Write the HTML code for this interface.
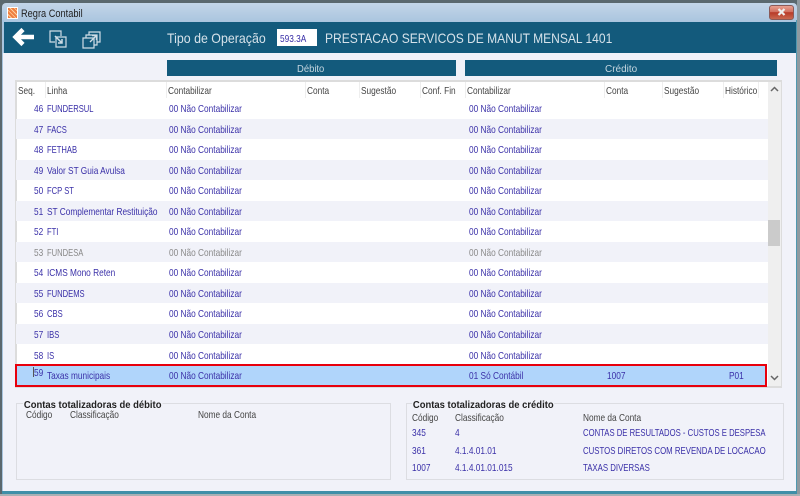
<!DOCTYPE html>
<html><head><meta charset="utf-8">
<style>
*{box-sizing:border-box;margin:0;padding:0}
html,body{width:800px;height:496px;overflow:hidden;background:#3a4a50}
body{position:relative;font-family:"Liberation Sans",sans-serif;font-size:10.5px;color:#444}
#w{position:absolute;left:0;top:0;width:800px;height:496px;filter:blur(.35px)}
.a{position:absolute;white-space:nowrap;line-height:12px}
.t{transform:scaleX(.79);transform-origin:0 0;margin-top:1px}
.u{transform:scaleX(.725)}
.b{color:#3a30a8}
.g{color:#8a8a8a}
.r{position:absolute;left:16px;width:752px}
</style></head><body><div id="w">
<div class="a" style="left:0;top:0;width:800px;height:496px;background:#5a686e"></div>
<div class="a" style="left:797px;top:0;width:3px;height:496px;background:#8f9aa0"></div>
<div class="a" style="left:0;top:494px;width:800px;height:2px;background:#a8b0b4"></div>
<div class="a" style="left:2px;top:3px;width:795px;height:20px;background:linear-gradient(#c3d5e8,#a8c4de);border-radius:4px 4px 0 0"></div>
<div class="a" style="left:2px;top:20px;width:2px;height:472px;background:#a8c4de"></div>
<div class="a" style="left:796px;top:20px;width:1px;height:472px;background:#4f98b0"></div>
<div class="a" style="left:2px;top:491px;width:795px;height:3px;background:#3f8fa8"></div>
<div class="a" style="left:7px;top:7px;width:11px;height:12px;background:#fff"></div>
<div class="a" style="left:8px;top:8px;width:9px;height:10px;background:repeating-linear-gradient(45deg,#f08040 0 2px,#fbd0a0 2px 3px)"></div>
<div class="a t" style="left:21px;top:7px;font-size:11px;color:#222;transform:scaleX(.84)">Regra Contabil</div>
<div class="a" style="left:769px;top:5px;width:25px;height:15px;border:1px solid #8a5a58;border-radius:3px;background:linear-gradient(#e8a090 0,#d07060 45%,#b83a28 50%,#c86850 100%)"></div>
<svg class="a" style="left:777px;top:8px" width="9" height="8" viewBox="0 0 9 8"><path d="M1.5 1 7.5 7M7.5 1 1.5 7" stroke="#eee" stroke-width="2.2"/></svg>

<div class="a" style="left:4px;top:22px;width:792px;height:31px;background:#135a7c"></div>
<div class="a" style="left:3px;top:53px;width:793px;height:438px;background:#f1f2f9"></div>

<svg class="a" style="left:12px;top:26px" width="24" height="22" viewBox="0 0 24 22"><path d="M11 3.500 3.500 11l7.500 7.500M5 11h17" fill="none" stroke="#fff" stroke-width="4.500"/></svg>
<svg class="a" style="left:48px;top:29px" width="20" height="20" viewBox="0 0 20 20" fill="none" stroke="#cfdde6" stroke-width="1.2"><path d="M7 13H2V2h11v5"/><path d="M8 8h10v10H8z"/><path d="M7 7l7 7M14 10v4h-4" stroke-width="1.5"/></svg>
<svg class="a" style="left:82px;top:30px" width="20" height="20" viewBox="0 0 20 20" fill="none" stroke="#cfdde6" stroke-width="1.2"><path d="M1 8h11v10H1z"/><path d="M4 8V5h11v10h-3"/><path d="M7 5V2h11v10h-3"/><path d="M8 12l6-6M10 5.500h4.500V10" stroke-width="1.4"/></svg>

<div class="a t" style="left:167px;top:29px;font-size:14px;line-height:16px;color:#d6e2ea;transform:scaleX(.885)">Tipo de Operação</div>
<div class="a" style="left:277px;top:29px;width:40px;height:17px;background:#fff"></div>
<div class="a t b" style="left:280px;top:32px">593.3A</div>
<div class="a t" style="left:325px;top:29px;font-size:14px;line-height:16px;color:#d6e2ea;transform:scaleX(.86)">PRESTACAO SERVICOS DE MANUT MENSAL 1401</div>

<div class="a" style="left:167px;top:60px;width:289px;height:16px;background:#135a7c"></div>
<div class="a" style="left:465px;top:60px;width:312px;height:16px;background:#135a7c"></div>
<div class="a t" style="left:297px;top:62px;color:#c5d6e0;transform:scaleX(.9)">Débito</div>
<div class="a t" style="left:605px;top:62px;color:#c5d6e0;transform:scaleX(.95)">Crédito</div>

<!-- grid -->
<div class="a" style="left:15px;top:80px;width:767px;height:308px;background:#fff;border:2px solid #dcdcdc;border-width:2px 1px 2px 2px"></div>
<div class="a" style="left:768px;top:82px;width:13px;height:304px;background:#efefef"></div>
<div class="a" style="left:768px;top:220px;width:12px;height:26px;background:#cbcbcb"></div>
<svg class="a" style="left:770px;top:86px" width="9" height="6" viewBox="0 0 9 6"><path d="M1 5 4.500 1.500 8 5" fill="none" stroke="#666" stroke-width="1.500"/></svg>
<svg class="a" style="left:770px;top:375px" width="9" height="6" viewBox="0 0 9 6"><path d="M1 1 4.500 4.500 8 1" fill="none" stroke="#666" stroke-width="1.500"/></svg>

<div class="r" style="top:119px;height:20px;background:#f1f2f9"></div>
<div class="r" style="top:160px;height:20px;background:#f1f2f9"></div>
<div class="r" style="top:201px;height:20px;background:#f1f2f9"></div>
<div class="r" style="top:242px;height:20px;background:#f1f2f9"></div>
<div class="r" style="top:283px;height:20px;background:#f1f2f9"></div>
<div class="r" style="top:324px;height:20px;background:#f1f2f9"></div>
<div class="a" style="left:15px;top:364px;width:752px;height:23px;background:#b0d5fb;border:2px solid #e8000c"></div>

<div class="a" style="left:45px;top:82px;width:1px;height:16px;background:#eee"></div>
<div class="a" style="left:166px;top:82px;width:1px;height:16px;background:#eee"></div>
<div class="a" style="left:305px;top:82px;width:1px;height:16px;background:#eee"></div>
<div class="a" style="left:359px;top:82px;width:1px;height:16px;background:#eee"></div>
<div class="a" style="left:420px;top:82px;width:1px;height:16px;background:#eee"></div>
<div class="a" style="left:465px;top:82px;width:1px;height:16px;background:#eee"></div>
<div class="a" style="left:604px;top:82px;width:1px;height:16px;background:#eee"></div>
<div class="a" style="left:662px;top:82px;width:1px;height:16px;background:#eee"></div>
<div class="a" style="left:723px;top:82px;width:1px;height:16px;background:#eee"></div>
<div class="a" style="left:758px;top:82px;width:1px;height:16px;background:#eee"></div>

<div class="a t" style="left:18px;top:84px">Seq.</div>
<div class="a t" style="left:47px;top:84px">Linha</div>
<div class="a t" style="left:168px;top:84px">Contabilizar</div>
<div class="a t" style="left:307px;top:84px">Conta</div>
<div class="a t" style="left:361px;top:84px">Sugestão</div>
<div class="a t" style="left:422px;top:84px">Conf. Fin</div>
<div class="a t" style="left:467px;top:84px">Contabilizar</div>
<div class="a t" style="left:606px;top:84px">Conta</div>
<div class="a t" style="left:664px;top:84px">Sugestão</div>
<div class="a t" style="left:725px;top:84px">Histórico</div>

<div class="a t b" style="left:34px;top:102px">46</div><div class="a t b u" style="left:47px;top:102px">FUNDERSUL</div><div class="a t b" style="left:169px;top:102px">00 Não Contabilizar</div><div class="a t b" style="left:469px;top:102px">00 Não Contabilizar</div>
<div class="a t b" style="left:34px;top:123px">47</div><div class="a t b u" style="left:47px;top:123px">FACS</div><div class="a t b" style="left:169px;top:123px">00 Não Contabilizar</div><div class="a t b" style="left:469px;top:123px">00 Não Contabilizar</div>
<div class="a t b" style="left:34px;top:143px">48</div><div class="a t b u" style="left:47px;top:143px">FETHAB</div><div class="a t b" style="left:169px;top:143px">00 Não Contabilizar</div><div class="a t b" style="left:469px;top:143px">00 Não Contabilizar</div>
<div class="a t b" style="left:34px;top:164px">49</div><div class="a t b" style="left:47px;top:164px">Valor ST Guia Avulsa</div><div class="a t b" style="left:169px;top:164px">00 Não Contabilizar</div><div class="a t b" style="left:469px;top:164px">00 Não Contabilizar</div>
<div class="a t b" style="left:34px;top:184px">50</div><div class="a t b u" style="left:47px;top:184px">FCP ST</div><div class="a t b" style="left:169px;top:184px">00 Não Contabilizar</div><div class="a t b" style="left:469px;top:184px">00 Não Contabilizar</div>
<div class="a t b" style="left:34px;top:205px">51</div><div class="a t b" style="left:47px;top:205px">ST Complementar Restituição</div><div class="a t b" style="left:169px;top:205px">00 Não Contabilizar</div><div class="a t b" style="left:469px;top:205px">00 Não Contabilizar</div>
<div class="a t b" style="left:34px;top:225px">52</div><div class="a t b u" style="left:47px;top:225px">FTI</div><div class="a t b" style="left:169px;top:225px">00 Não Contabilizar</div><div class="a t b" style="left:469px;top:225px">00 Não Contabilizar</div>
<div class="a t g" style="left:34px;top:246px">53</div><div class="a t g u" style="left:47px;top:246px">FUNDESA</div><div class="a t g" style="left:169px;top:246px">00 Não Contabilizar</div><div class="a t g" style="left:469px;top:246px">00 Não Contabilizar</div>
<div class="a t b" style="left:34px;top:266px">54</div><div class="a t b" style="left:47px;top:266px">ICMS Mono Reten</div><div class="a t b" style="left:169px;top:266px">00 Não Contabilizar</div><div class="a t b" style="left:469px;top:266px">00 Não Contabilizar</div>
<div class="a t b" style="left:34px;top:287px">55</div><div class="a t b u" style="left:47px;top:287px">FUNDEMS</div><div class="a t b" style="left:169px;top:287px">00 Não Contabilizar</div><div class="a t b" style="left:469px;top:287px">00 Não Contabilizar</div>
<div class="a t b" style="left:34px;top:307px">56</div><div class="a t b u" style="left:47px;top:307px">CBS</div><div class="a t b" style="left:169px;top:307px">00 Não Contabilizar</div><div class="a t b" style="left:469px;top:307px">00 Não Contabilizar</div>
<div class="a t b" style="left:34px;top:328px">57</div><div class="a t b u" style="left:47px;top:328px">IBS</div><div class="a t b" style="left:169px;top:328px">00 Não Contabilizar</div><div class="a t b" style="left:469px;top:328px">00 Não Contabilizar</div>
<div class="a t b" style="left:34px;top:349px">58</div><div class="a t b u" style="left:47px;top:349px">IS</div><div class="a t b" style="left:169px;top:349px">00 Não Contabilizar</div><div class="a t b" style="left:469px;top:349px">00 Não Contabilizar</div>
<div class="a" style="left:33px;top:367px;width:1px;height:10px;background:#555"></div>
<div class="a t b" style="left:34px;top:366px">59</div><div class="a t b" style="left:47px;top:369px">Taxas municipais</div><div class="a t b" style="left:169px;top:369px">00 Não Contabilizar</div><div class="a t b" style="left:469px;top:369px">01 Só Contábil</div><div class="a t b" style="left:607px;top:369px">1007</div><div class="a t b" style="left:729px;top:369px">P01</div>

<!-- group boxes -->
<div class="a" style="left:16px;top:403px;width:375px;height:77px;border:1px solid #dcdde2"></div>
<div class="a" style="left:406px;top:403px;width:378px;height:77px;border:1px solid #dcdde2"></div>
<div class="a t" style="left:23px;top:398px;background:#f1f2f9;font-weight:bold;font-size:10.5px;color:#222;padding:0 1px;transform:scaleX(.9)">Contas totalizadoras de débito</div>
<div class="a t" style="left:412px;top:398px;background:#f1f2f9;font-weight:bold;font-size:10.5px;color:#222;padding:0 1px;transform:scaleX(.9)">Contas totalizadoras de crédito</div>
<div class="a t" style="left:26px;top:408px">Código</div>
<div class="a t" style="left:70px;top:408px">Classificação</div>
<div class="a t" style="left:198px;top:408px">Nome da Conta</div>
<div class="a t" style="left:412px;top:411px">Código</div>
<div class="a t" style="left:455px;top:411px">Classificação</div>
<div class="a t" style="left:583px;top:411px">Nome da Conta</div>
<div class="a t b" style="left:412px;top:426px">345</div><div class="a t b" style="left:455px;top:426px">4</div><div class="a t b" style="left:583px;top:426px;transform:scaleX(.735)">CONTAS DE RESULTADOS - CUSTOS E DESPESA</div>
<div class="a t b" style="left:412px;top:444px">361</div><div class="a t b" style="left:455px;top:444px">4.1.4.01.01</div><div class="a t b" style="left:583px;top:444px;transform:scaleX(.745)">CUSTOS DIRETOS COM REVENDA DE LOCACAO</div>
<div class="a t b" style="left:412px;top:461px">1007</div><div class="a t b" style="left:455px;top:461px">4.1.4.01.01.015</div><div class="a t b" style="left:583px;top:461px;transform:scaleX(.745)">TAXAS DIVERSAS</div>
</div></body></html>
